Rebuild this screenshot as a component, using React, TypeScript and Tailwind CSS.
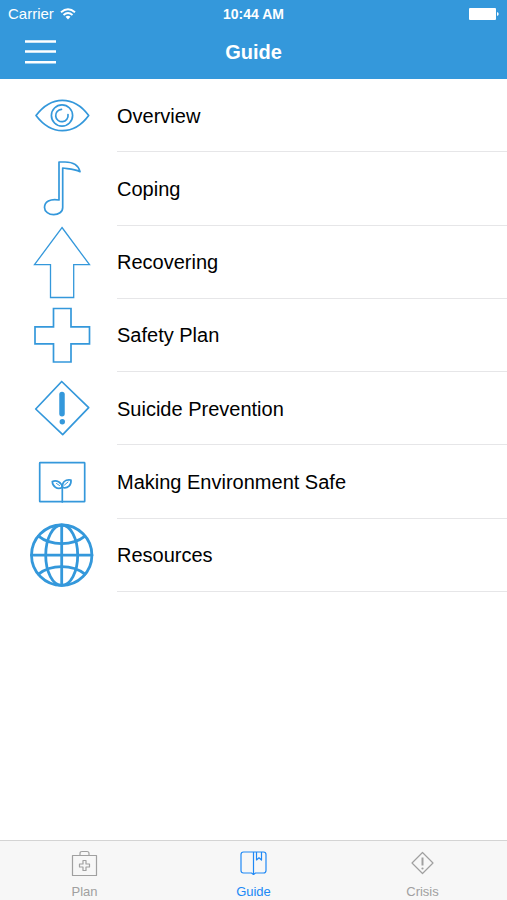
import type { ReactNode } from "react";

interface GuideItem {
  id: string;
  text: string;
  icon: ReactNode;
}

interface Tab {
  id: string;
  text: string;
  icon: ReactNode;
  current?: boolean;
}

const items: GuideItem[] = [
  {
    id: "overview",
    text: "Overview",
    icon: (
      <>
        <path d="M8 36.500C16 26 24.500 21.300 34.300 21.300S53 26 60.700 36.500C53 47 44 51.700 34.300 51.700S16 47 8 36.500Z" />
        <circle cx="34" cy="36.500" r="10.600" />
        <path d="M33.500 30.300A6.200 6.200 0 1 0 40 35.500" />
      </>
    ),
  },
  {
    id: "coping",
    text: "Coping",
    icon: (
      <path d="M31 48V10H37C45 10 50.500 13.500 52 19.600C46 17.200 40.500 17 34.700 16V55.400C34.700 60 30.500 62.700 25.700 62.700S16.500 59.600 16.500 55.400C16.500 50 22 46.300 31 48Z" />
    ),
  },
  {
    id: "recovering",
    text: "Recovering",
    icon: (
      <path
        strokeWidth="1.300"
        strokeLinejoin="miter"
        d="M34 1.500L61.500 38.700H45.700V71.500H22.500V38.700H6.500Z"
      />
    ),
  },
  {
    id: "safety-plan",
    text: "Safety Plan",
    icon: (
      <path
        strokeLinejoin="miter"
        d="M25.500 9.500H43V27.800H61.500V44.800H43V63H25.500V44.800H7V27.800H25.500Z"
      />
    ),
  },
  {
    id: "suicide-prevention",
    text: "Suicide Prevention",
    icon: (
      <>
        <path d="M33.700 9.500L60.700 35.700L34.700 62.700L7.700 37Z" />
        <path d="M34 22.500V41.700" strokeWidth="5.500" />
        <circle cx="34.300" cy="49.700" r="2.700" fill="currentColor" stroke="none" />
      </>
    ),
  },
  {
    id: "environment",
    text: "Making Environment Safe",
    icon: (
      <>
        <rect x="11.700" y="16.700" width="45" height="39" rx="0.500" />
        <path d="M34.300 56V40" />
        <path d="M34.200 41.500C33.500 36 28.500 33.800 24.300 35.500C24.500 40.500 29 43.800 34.200 41.500Z" />
        <path d="M34.500 41.500C33.800 36.500 37 33 43 34C43.500 39 40 42.800 34.500 41.500Z" />
        <path d="M28.500 37.500L31.500 39.500M40 36L36.500 39" strokeWidth="1" />
      </>
    ),
  },
  {
    id: "resources",
    text: "Resources",
    icon: (
      <g strokeWidth="2.800">
        <circle cx="33.700" cy="36.200" r="30.200" />
        <ellipse cx="33.700" cy="36.200" rx="16" ry="30.200" />
        <path d="M33.700 6.200V66.200M3.500 36.200H64" />
        <path d="M10.500 17.200C23 27.200 44.500 27.200 57 17.200M10.500 55.200C23 45.200 44.500 45.200 57 55.200" />
      </g>
    ),
  },
];

const tabs: Tab[] = [
  {
    id: "plan",
    text: "Plan",
    icon: (
      <>
        <path d="M2.500 6.500H26.500V26.500H2.500Z" />
        <path d="M10 6V4.500Q10 2.500 12 2.500H17Q19 2.500 19 4.500V6" />
        <path d="M13 11.500H16V15H19.500V18H16V21.500H13V18H9.500V15H13Z" />
      </>
    ),
  },
  {
    id: "guide",
    text: "Guide",
    current: true,
    icon: (
      <>
        <path d="M4.500 3H24.500Q27 3 27 5.500V21.500Q27 24 24.500 24H16.500L14.500 25.500L12.500 24H4.500Q2 24 2 21.500V5.500Q2 3 4.500 3Z" />
        <path d="M14.500 3V25.500M17.500 3V11L20 8.800L22.500 11V3" />
      </>
    ),
  },
  {
    id: "crisis",
    text: "Crisis",
    icon: (
      <>
        <path d="M14.500 3.500L25 14L14.500 24.500L4 14Z" />
        <path d="M14.500 8.500V16.500" strokeWidth="2" />
        <circle cx="14.500" cy="19.500" r="1.100" fill="currentColor" stroke="none" />
      </>
    ),
  },
];

const StatusBar = () => (
  <div className="grid grid-cols-3 items-center h-7 px-2">
    <div className="flex items-center gap-1.5 text-[15px]">
      <span>Carrier</span>
      <svg className="w-4 h-3" viewBox="0 0 16 12" fill="none" aria-hidden="true">
        <path d="M1 4.300Q8-1.800 15 4.300" stroke="currentColor" strokeWidth="1.900" />
        <path d="M3.500 7Q8 3.100 12.500 7" stroke="currentColor" strokeWidth="1.900" />
        <path d="M5.500 8.800Q8 6.700 10.500 8.800L8 11.500Z" fill="currentColor" />
      </svg>
    </div>
    <div className="text-center text-sm font-bold whitespace-nowrap">
      10:44 AM
    </div>
    <svg
      className="justify-self-end w-[30px] h-3"
      viewBox="0 0 30 12"
      fill="currentColor"
      aria-hidden="true"
    >
      <rect width="27" height="12" rx="1" />
      <path d="M28 4Q29.700 4.500 29.700 6T28 8Z" />
    </svg>
  </div>
);

const App = () => {
  return (
    <div className="flex flex-col min-h-screen bg-white text-black font-['Liberation_Sans',Arial,sans-serif]">
      <header className="bg-[#3498db] text-white">
        <StatusBar />
        <div className="grid grid-cols-3 items-center h-[51px] px-6 pb-1">
          <button type="button" aria-label="Open menu" className="w-8">
            <svg
              className="w-8 h-6"
              viewBox="0 0 32 24"
              stroke="currentColor"
              strokeWidth="2.500"
              aria-hidden="true"
            >
              <path d="M1 1.500H32M1 11.500H32M1 22.300H32" />
            </svg>
          </button>
          <h1 className="text-center text-xl font-bold">Guide</h1>
        </div>
      </header>

      <main className="flex-1">
        <ul className="grid grid-rows-7 min-h-[513px]">
          {items.map((item) => (
            <li key={item.id} className="flex">
              <a href={`#${item.id}`} className="flex flex-1">
                <span className="flex items-center w-[117px] shrink-0 pl-7 text-[#3498db]">
                  <svg
                    className="w-[68px] h-[73px]"
                    viewBox="0 0 68 73"
                    fill="none"
                    stroke="currentColor"
                    strokeWidth="1.700"
                    strokeLinecap="round"
                    strokeLinejoin="round"
                    aria-hidden="true"
                  >
                    {item.icon}
                  </svg>
                </span>
                <span className="flex items-center flex-1 pt-px border-b border-[#e6e6e8] text-xl">
                  {item.text}
                </span>
              </a>
            </li>
          ))}
        </ul>
      </main>

      <nav
        aria-label="Sections"
        className="grid grid-cols-3 border-t border-[#d4d4d4] bg-[#f7f7f7] pt-2"
      >
        {tabs.map((tab) => (
          <a
            key={tab.id}
            href={`#${tab.id}`}
            aria-current={tab.current ? "page" : undefined}
            className={
              tab.current
                ? "flex flex-col items-center gap-1.5 text-[13px] leading-4 text-[#2089f5]"
                : "flex flex-col items-center gap-1.5 text-[13px] leading-4 text-[#a0a0a0]"
            }
          >
            <svg
              className="w-[29px] h-[29px]"
              viewBox="0 0 29 29"
              fill="none"
              stroke="currentColor"
              strokeWidth="1.200"
              strokeLinejoin="round"
              aria-hidden="true"
            >
              {tab.icon}
            </svg>
            {tab.text}
          </a>
        ))}
      </nav>
    </div>
  );
};

export default App;
